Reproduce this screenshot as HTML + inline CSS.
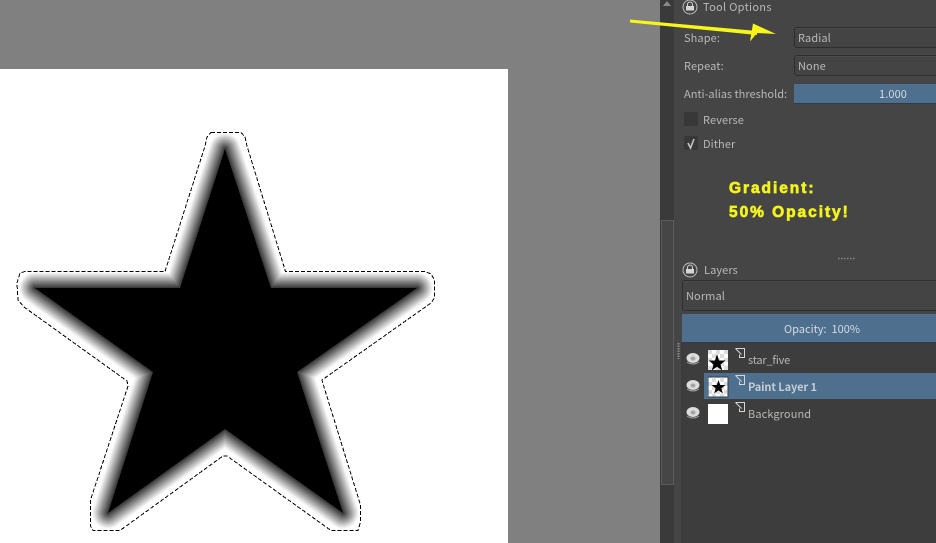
<!DOCTYPE html>
<html><head><meta charset="utf-8"><style>
html,body{margin:0;padding:0;width:936px;height:543px;overflow:hidden;background:#808080}
.a{position:absolute}
.t{position:absolute;font:11px "Noto Sans CJK SC","Liberation Sans",sans-serif;letter-spacing:.1px;color:#b8b8b8;line-height:14px;white-space:nowrap}
.combo{position:absolute;background:#444;border:1px solid #2e2e2e;border-radius:3px;box-sizing:border-box;box-shadow:inset 0 1px 0 #4c4c4c}
.bar{position:absolute;background:#4e6f8e;border-bottom:1px solid #2f3b47;box-sizing:border-box}
.y{position:absolute;left:729px;font:bold 15.500px "Liberation Sans",sans-serif;color:#f4f41c;letter-spacing:1.95px;line-height:16px;white-space:nowrap;-webkit-text-stroke:.7px #f4f41c}
</style></head><body>
<div class="a" style="left:0;top:69px;width:508px;height:474px;background:#fff"></div>
<svg class="a" style="left:0;top:0" width="660" height="543" viewBox="0 0 660 543">
<defs><polygon id="s" points="225,149 271,288 417,288 297,372 343,513 225,429 108,513 153,372 35,288 180,288" stroke-linejoin="round"/></defs>
<g fill="none">
<use href="#s" stroke="#fafafa" stroke-width="32"/>
<use href="#s" stroke="#f0f0f0" stroke-width="30"/>
<use href="#s" stroke="#e3e3e3" stroke-width="28"/>
<use href="#s" stroke="#d6d6d6" stroke-width="26"/>
<use href="#s" stroke="#c9c9c9" stroke-width="24"/>
<use href="#s" stroke="#bcbcbc" stroke-width="22"/>
<use href="#s" stroke="#afafaf" stroke-width="20"/>
<use href="#s" stroke="#a2a2a2" stroke-width="18"/>
<use href="#s" stroke="#959595" stroke-width="16"/>
<use href="#s" stroke="#888888" stroke-width="14"/>
<use href="#s" stroke="#7b7b7b" stroke-width="12"/>
<use href="#s" stroke="#6e6e6e" stroke-width="10"/>
<use href="#s" stroke="#616161" stroke-width="8"/>
<use href="#s" stroke="#545454" stroke-width="6"/>
<use href="#s" stroke="#474747" stroke-width="4"/>
<use href="#s" stroke="#3a3a3a" stroke-width="2"/>
</g>
<use href="#s" fill="#000"/>
<polygon points="211,132.500 241,132.500 245,137 247,146 285.500,271.500 425,271.500 431,274 434.500,280 434.500,298 431,303 322,380 324,387 360.500,505 360.500,522 358,530.500 331,530.500 227,456 223,456 120,530.500 93,530.500 90.500,526 90.500,500 128,386 127,381 24,307 18,300 17,283 20,273 25,271.500 165,271.500 205,146 207,137" fill="none" stroke="#000" stroke-width="1" stroke-dasharray="4 2" shape-rendering="crispEdges"/>
</svg>
<!-- right dock -->
<div class="a" style="left:660px;top:0;width:14px;height:543px;background:#3a3a3a"></div>
<div class="a" style="left:661px;top:220px;width:13px;height:265px;background:#464646;border:1px solid #5c5c5c;box-sizing:border-box"></div>
<div class="a" style="left:674px;top:0;width:262px;height:543px;background:#454545"></div>
<div class="a" style="left:681px;top:343px;width:255px;height:200px;background:#3d3d3d"></div>
<svg class="a" style="left:660px;top:0" width="14" height="8"><polygon points="3,6 7,1 11,6" fill="#8a8a8a"/></svg>

<svg class="a" style="left:681px;top:0" width="18" height="16" viewBox="0 0 18 16" fill="none">
<circle cx="9" cy="7" r="7" stroke="#bdbdbd" stroke-width="1"/><path d="M6.500 6V4.500a2.500 2.500 0 0 1 5 0V6" stroke="#d5d5d5" stroke-width="1"/><rect x="5" y="6" width="8" height="4.500" fill="#d5d5d5"/></svg>
<div class="t" style="left:703px;top:0;letter-spacing:.3px">Tool Options</div>

<div class="t" style="left:684px;top:31px">Shape:</div>
<div class="combo" style="left:794px;top:27px;width:150px;height:21px"></div>
<div class="t" style="left:798px;top:31px">Radial</div>
<div class="t" style="left:684px;top:59px">Repeat:</div>
<div class="combo" style="left:794px;top:55px;width:150px;height:21px"></div>
<div class="t" style="left:798px;top:59px">None</div>
<div class="t" style="left:684px;top:87px;letter-spacing:0">Anti-alias threshold:</div>
<div class="bar" style="left:794px;top:84px;width:142px;height:20px"></div>
<div class="t" style="left:879px;top:87px;color:#d4dbe2">1.000</div>
<div class="a" style="left:684px;top:112px;width:14px;height:14px;background:#383838"></div>
<div class="t" style="left:703px;top:113px">Reverse</div>
<div class="a" style="left:684px;top:136px;width:14px;height:14px;background:#383838"></div>
<svg class="a" style="left:684px;top:136px" width="14" height="14"><path d="M4 7l2.500 5L10 3" fill="none" stroke="#c4c4c4" stroke-width="1.600"/></svg>
<div class="t" style="left:703px;top:137px">Dither</div>

<div class="y" style="top:181px">Gradient:</div>
<div class="y" style="top:205px">50% Opacity!</div>

<svg class="a" style="left:625px;top:10px" width="160" height="40"><polygon points="5,9.500 5,12.500 132,25 132,21" fill="#f6f61a"/><polygon points="151,24 128,13.500 125,31.500 132,23" fill="#f6f61a"/></svg>

<svg class="a" style="left:838px;top:257px" width="18" height="3"><path d="M0 1.500H17" stroke="#8a8a8a" stroke-width="1.500" stroke-dasharray="1.500 1.500"/></svg>

<svg class="a" style="left:681px;top:262px" width="18" height="16" viewBox="0 0 18 16" fill="none">
<circle cx="9" cy="8" r="7" stroke="#bdbdbd" stroke-width="1"/><path d="M6.500 7V5.500a2.500 2.500 0 0 1 5 0V7" stroke="#d5d5d5" stroke-width="1"/><rect x="5" y="7" width="8" height="4.500" fill="#d5d5d5"/></svg>
<div class="t" style="left:704px;top:263px">Layers</div>
<div class="combo" style="left:682px;top:280px;width:260px;height:31px"></div>
<div class="t" style="left:686px;top:289px">Normal</div>
<div class="bar" style="left:682px;top:314px;width:254px;height:29px"></div>
<div class="t" style="left:784px;top:322px;color:#d4dbe2;letter-spacing:0">Opacity:&nbsp; 100%</div>
<svg class="a" style="left:677px;top:343px" width="3" height="17"><path d="M1.500 0V16" stroke="#8a8a8a" stroke-width="2" stroke-dasharray="1.500 1"/></svg>

<div class="a" style="left:704px;top:373px;width:232px;height:26px;background:#4e6f8e"></div>

<svg class="a" style="left:684px;top:350px" width="20" height="75" viewBox="0 0 20 75">
<defs><g id="e"><ellipse cx="9" cy="8" rx="6.500" ry="5" fill="#dcdcdc"/><ellipse cx="9" cy="8.500" rx="2.500" ry="2" fill="#a4a4a4"/><path d="M3 12Q9 16 15 12" stroke="#a8a8a8" fill="none"/></g></defs>
<use href="#e" y="0"/><use href="#e" y="27"/><use href="#e" y="54"/></svg>

<svg class="a" style="left:708px;top:350px" width="21" height="75" viewBox="0 0 21 75">
<defs><pattern id="c" width="8" height="8" patternUnits="userSpaceOnUse"><rect width="8" height="8" fill="#fff"/><rect width="4" height="4" fill="#ddd"/><rect x="4" y="4" width="4" height="4" fill="#ddd"/></pattern></defs>
<rect x="0" y="0" width="20" height="20" fill="url(#c)"/>
<polygon points="9,4 11,10.500 17.500,10.500 12.500,14.500 14.300,20.500 9,16.800 3.700,20.500 5.500,14.500 0.800,10.500 7,10.500" fill="#000"/>
<rect x="-0.500" y="26.500" width="21" height="21" fill="#35404a"/>
<rect x="0.500" y="27.500" width="19" height="19" fill="url(#c)"/>
<polygon points="10.500,30 12.200,35 17.500,35 13.300,38.200 14.900,43.500 10.500,40.300 6.100,43.500 7.700,38.200 3.500,35 8.800,35" fill="#000"/>
<rect x="0" y="54" width="20" height="20" fill="#fff"/></svg>

<svg class="a" style="left:734px;top:346px" width="14" height="70" viewBox="0 0 14 70" fill="none" stroke="#d6d6d6" stroke-width="1">
<path d="M1.500 2.500H10.500V11.500H5.500V8.500M1.500 2.500L7.500 8.500"/>
<path d="M1.500 29.500H10.500V38.500H5.500V35.500M1.500 29.500L7.500 35.500"/>
<path d="M1.500 56.500H10.500V65.500H5.500V62.500M1.500 56.500L7.500 62.500"/></svg>

<div class="t" style="left:748px;top:353px;letter-spacing:-.2px">star_five</div>
<div class="t" style="left:748px;top:380px;font-weight:bold;color:#c4ccd4;letter-spacing:-.1px">Paint Layer 1</div>
<div class="t" style="left:748px;top:407px">Background</div>
</body></html>
